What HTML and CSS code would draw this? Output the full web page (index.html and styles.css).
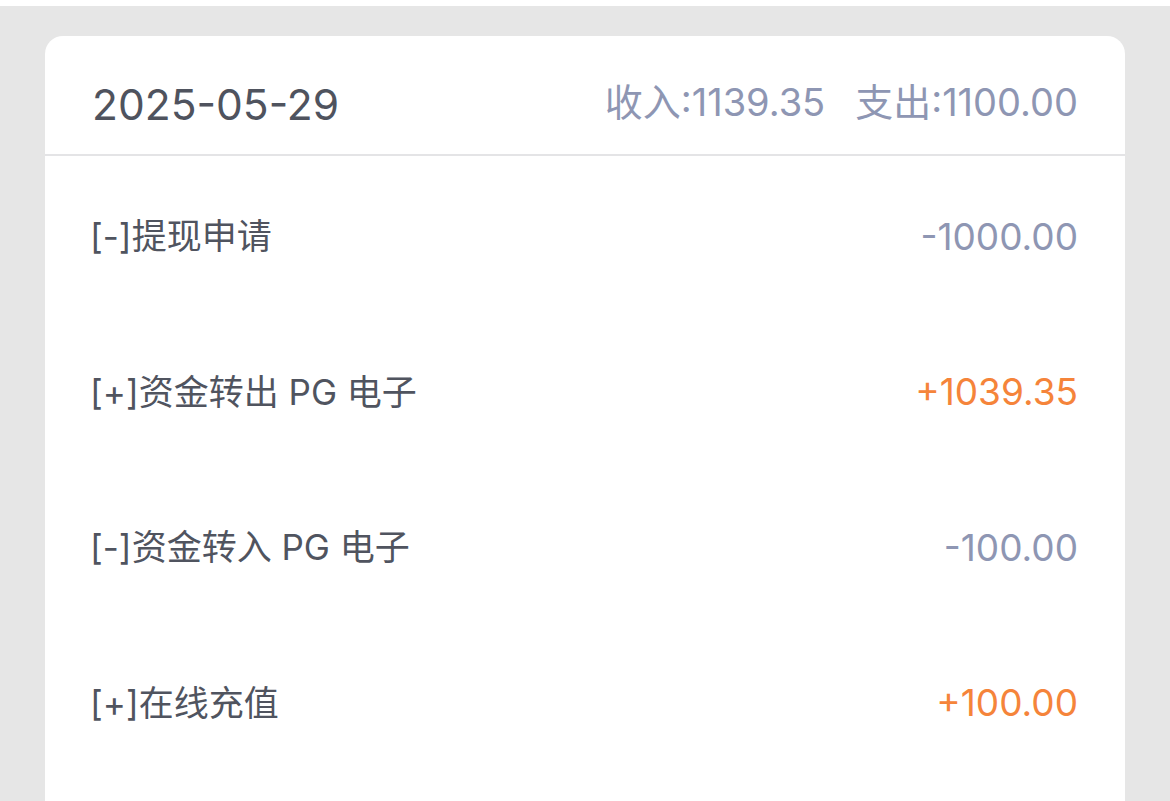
FILE: index.html
```html
<!DOCTYPE html>
<html lang="zh-CN">
<head>
<meta charset="utf-8">
<link rel="stylesheet" href="styles.css">
</head>
<body>
<div class="page">
  <div class="card">
    <div class="card-head">
      <div class="date">2025-05-29</div>
      <div class="summary"><span>收入:1139.35</span><span>支出:1100.00</span></div>
    </div>
    <div class="list">
      <div class="row"><span class="label">[-]提现申请</span><span class="amt neg">-1000.00</span></div>
      <div class="row"><span class="label">[+]资金转出 PG 电子</span><span class="amt pos">+1039.35</span></div>
      <div class="row"><span class="label">[-]资金转入 PG 电子</span><span class="amt neg">-100.00</span></div>
      <div class="row"><span class="label">[+]在线充值</span><span class="amt pos">+100.00</span></div>
    </div>
  </div>
</div>
</body>
</html>
```

FILE: styles.css
```css
html, body {
  margin: 0;
  padding: 0;
  height: 100%;
  overflow: hidden;
}
body {
  background: #ffffff;
  font-family: Inter, "Noto Sans CJK SC", sans-serif;
}
.page {
  margin-top: 6px;
  background: #e6e6e6;
  height: 795px;
  padding: 30px 45px 0 45px;
  box-sizing: border-box;
}
.card {
  background: #ffffff;
  border-radius: 18px 18px 0 0;
  height: 100%;
}
.card-head {
  height: 120px;
  box-sizing: border-box;
  border-bottom: 2px solid #e4e4e6;
  display: flex;
  align-items: center;
  justify-content: space-between;
  padding: 18px 47px 0 47px;
}
.date {
  font-size: 42.5px;
  color: #4f535e;
}
.summary {
  display: flex;
  gap: 30px;
  font-size: 38px;
  color: #8e96b3;
  margin-top: -10px;
}
.row {
  height: 155.5px;
  display: flex;
  align-items: center;
  justify-content: space-between;
  padding: 0 47px 0 45px;
}
.label {
  font-size: 35px;
  color: #50545f;
  font-weight: 400;
}
.amt {
  font-size: 37px;
  margin-top: 5px;
}
.neg { color: #8e96b3; }
.pos { color: #f5843a; }
```
